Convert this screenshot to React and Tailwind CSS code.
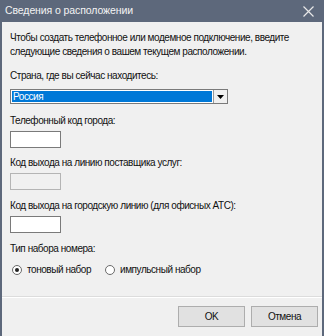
import React from 'react';

const Field = ({ label, disabled, gap }) => (
  <div className={gap}>
    <p className="leading-[14px]">{label}</p>
    <div
      className={`mt-[3px] w-[51px] h-[17px] border ${
        disabled ? 'border-[#b4b4b4] bg-[#f0f0f0]' : 'border-[#7a7a7a] bg-white'
      }`}
    />
  </div>
);

const Radio = ({ checked, label }) => (
  <label className="flex items-center gap-[5px]">
    <span className="w-[10px] h-[10px] rounded-full border border-[#6a6a6a] bg-white flex items-center justify-center">
      {checked && <span className="w-[4px] h-[4px] rounded-full bg-[#222]" />}
    </span>
    <span>{label}</span>
  </label>
);

export default function App() {
  return (
    <div
      className="w-[324px] h-[336px] bg-[#f0f0f0] border-x-2 border-[#5d687b] flex flex-col text-[10px] tracking-[-0.45px] text-[#111]"
      style={{ fontFamily: '"Liberation Sans", Arial, sans-serif' }}
    >
      {/* Title bar */}
      <div className="h-[22px] bg-[#5d687b] flex items-center justify-between pl-[3px] pr-[8px] text-[#f3f3f3] text-[10.5px] tracking-[-0.1px]">
        <span>Сведения о расположении</span>
        <svg width="11" height="11" viewBox="0 0 11 11" stroke="#e8e8e8" strokeWidth="1.2">
          <path d="M0.5 0.5 L10.5 10.5 M10.5 0.5 L0.5 10.5" />
        </svg>
      </div>

      <div className="px-[8px] pt-[9px] flex-1">
        <p className="leading-[14px]">
          Чтобы создать телефонное или модемное подключение, введите следующие сведения о вашем текущем расположении.
        </p>

        <p className="mt-[10px] leading-[14px]">Страна, где вы сейчас находитесь:</p>
        <div className="mt-[6px] w-[218px] h-[15px] border border-[#7a7a7a] bg-white flex">
          <div className="flex-1 m-[1px] bg-[#0078d7] text-white leading-[11px] px-[1px]">Россия</div>
          <div className="w-[14px] border-l border-[#9a9a9a] bg-[#f0f0f0] flex items-center justify-center">
            <svg width="7" height="4" viewBox="0 0 7 4"><path d="M0 0 H7 L3.5 4 Z" fill="#000" /></svg>
          </div>
        </div>

        <Field gap="mt-[10px]" label="Телефонный код города:" />
        <Field gap="mt-[8px]" label="Код выхода на линию поставщика услуг:" disabled />
        <Field gap="mt-[9px]" label="Код выхода на городскую линию (для офисных АТС):" />

        <p className="mt-[9px] leading-[14px]">Тип набора номера:</p>
        <div className="mt-[6px] flex items-center gap-[14px] pl-[2px]">
          <Radio checked label="тоновый набор" />
          <Radio label="импульсный набор" />
        </div>
      </div>

      <div className="border-t border-[#dcdcdc] shadow-[inset_0_1px_0_#ffffff] h-[40px] flex items-center justify-end gap-[6px] pr-[4px]">
        <button className="w-[67px] h-[21px] border border-[#adadad] bg-[#e1e1e1]">OK</button>
        <button className="w-[67px] h-[21px] border border-[#adadad] bg-[#e1e1e1]">Отмена</button>
      </div>
    </div>
  );
}
